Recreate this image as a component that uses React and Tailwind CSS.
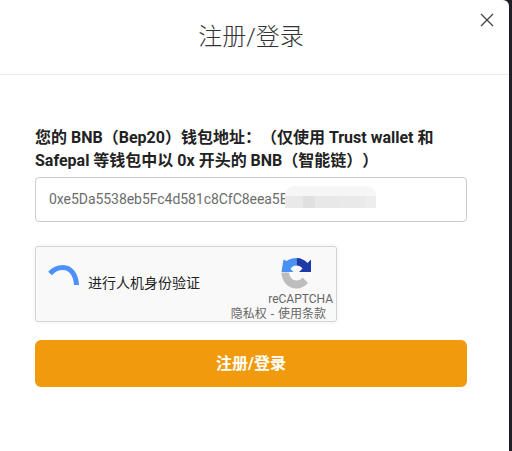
export default function App() {
  const font = { fontFamily: 'Roboto, "Noto Sans CJK SC", sans-serif' };
  return (
    <div style={font} className="w-[512px] h-[451px] bg-[#1f2024] overflow-hidden">
      <div className="relative w-[509px] h-[451px] bg-white rounded-tr-[6px]">
        <header className="h-[75px] border-b border-[#e9e9e9] flex items-center justify-center pr-[7px]">
          <h1 className="text-[24px] leading-[30px] font-light text-[#333] pb-[1px]">注册/登录</h1>
        </header>
        <button className="absolute right-[15px] top-[13px] w-[14px] h-[14px] text-[#444]">
          <svg viewBox="0 0 14 14" className="w-[14px] h-[14px]" fill="none" stroke="currentColor" strokeWidth="1.3">
            <path d="M1 1L13 13M13 1L1 13" />
          </svg>
        </button>
        <main className="px-[35px] pt-[51px] w-[502px]">
          <label className="block text-[16px] leading-[23px] font-bold text-[#222] [text-spacing-trim:space-all]">
            您的 BNB（Bep20）钱包地址：（仅使用 Trust wallet 和 Safepal 等钱包中以 0x 开头的 BNB（智能链））
          </label>
          <div className="relative mt-[5px] h-[45px] border border-[#ccc] rounded-[4px] flex items-center pl-[13px] text-[14px] text-[#6c6c6c] tracking-[-0.05px] overflow-hidden">
            0xe5Da5538eb5Fc4d581c8CfC8eea5E
            <div className="absolute left-[249px] top-[8px] w-[91px] h-[22px] flex flex-col">
              <div className="h-[10px] bg-[#f6f6f6] rounded-t-[9px]" />
              <div className="flex-1 flex">
                <div className="w-[18px] bg-[#e9e9e9]" />
                <div className="w-[12px] bg-[#e0e0e0]" />
                <div className="w-[25px] bg-[#e8e8e8]" />
                <div className="w-[25px] bg-[#e9e9e9]" />
                <div className="flex-1 bg-[#ededed]" />
              </div>
            </div>
          </div>
          <div className="relative mt-[24px] w-[302px] h-[76px] bg-[#f9f9f9] border border-[#d3d3d3] rounded-[3px] shadow-[0_0_4px_rgba(0,0,0,0.08)]">
            <svg viewBox="0 0 40 30" className="absolute left-[11px] top-[17px] w-[40px] h-[30px]" fill="none">
              <path d="M3 9.5C6.5 5.5 11 3.5 16 3.5C24 3.5 29 11 29.5 21" stroke="#4d90fe" strokeWidth="5" />
            </svg>
            <span className="absolute left-[52px] top-[27px] text-[14px] leading-[18px] text-[#222]">进行人机身份验证</span>
            <svg viewBox="0 0 32 32" className="absolute left-[245px] top-[10px] w-[32px] h-[32px]">
              <path d="M2.5 2.5L5.5 4C8 2 12 1 15.5 1V8.5C12.5 8.5 10.5 10 9.5 12L12.5 15H0.5Z" fill="#4a90f5" />
              <path d="M15.5 1C20 1 24 3 26.5 6L30 2.5V15H18L21.5 11.5C20 9.5 18 8.5 15.5 8.5Z" fill="#1c3aa9" />
              <path d="M0.5 15.5H8C8.5 20 11.5 23.5 15.5 23.5C18 23.5 20 22.5 21.5 20.5L27 26C24 29.5 20 31.5 15.5 31.5C7 31.5 0.5 24.5 0.5 15.5Z" fill="#bdbdbd" />
            </svg>
            <span className="absolute right-[3px] top-[45px] text-[12px] leading-[14px] text-[#666]">reCAPTCHA</span>
            <span className="absolute right-[10px] top-[60px] text-[12px] leading-[14px] text-[#666] [word-spacing:1px]">隐私权 - 使用条款</span>
          </div>
          <button className="mt-[18px] w-full h-[47px] rounded-[6px] bg-[#f19b0c] text-white text-[16px] font-bold">注册/登录</button>
        </main>
      </div>
    </div>
  );
}
